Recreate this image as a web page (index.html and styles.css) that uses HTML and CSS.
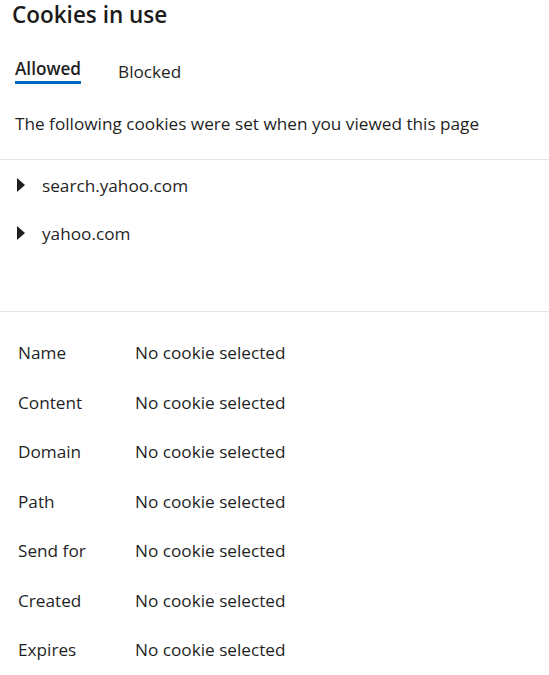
FILE: index.html
```html
<!DOCTYPE html>
<html>
<head>
<meta charset="utf-8">
<link rel="stylesheet" href="styles.css">
</head>
<body>
<div class="panel">
  <h1 class="title">Cookies in use</h1>
  <div class="tabs">
    <div class="tab active">Allowed</div>
    <div class="tab">Blocked</div>
  </div>
  <p class="desc">The following cookies were set when you viewed this page</p>
  <div class="tree">
    <div class="node"><span class="caret"></span><span>search.yahoo.com</span></div>
    <div class="node"><span class="caret"></span><span>yahoo.com</span></div>
  </div>
  <div class="details">
    <div class="row"><span class="label">Name</span><span class="value">No cookie selected</span></div>
    <div class="row"><span class="label">Content</span><span class="value">No cookie selected</span></div>
    <div class="row"><span class="label">Domain</span><span class="value">No cookie selected</span></div>
    <div class="row"><span class="label">Path</span><span class="value">No cookie selected</span></div>
    <div class="row"><span class="label">Send for</span><span class="value">No cookie selected</span></div>
    <div class="row"><span class="label">Created</span><span class="value">No cookie selected</span></div>
    <div class="row"><span class="label">Expires</span><span class="value">No cookie selected</span></div>
  </div>
</div>
</body>
</html>
```
FILE: styles.css
```css
html, body {
  margin: 0;
  padding: 0;
  background: #ffffff;
}
body {
  font-family: "Open Sans", "Noto Sans", sans-serif;
  color: #1f1f1f;
  font-size: 17.2px;
}
.panel {
  width: 549px;
}
.title {
  margin: 0;
  padding: 0 0 0 12px;
  font-size: 22.5px;
  font-weight: 600;
  line-height: 30px;
  height: 30px;
  color: #1b1b1b;
}
.tabs {
  display: flex;
  align-items: flex-start;
  gap: 37px;
  padding: 29px 0 0 15px;
}
.tab {
  line-height: 20px;
  padding-top: 3px;
}
.tab.active {
  font-weight: 600;
  border-bottom: 3px solid #0067c0;
  padding-top: 0;
  padding-bottom: 2px;
}
.desc {
  margin: 0;
  padding: 30px 0 0 15px;
  line-height: 20px;
  height: 45px;
}
.tree {
  border-top: 1px solid #e5e5e5;
  border-bottom: 1px solid #e5e5e5;
  padding-top: 1px;
  height: 150px;
}
.node {
  display: flex;
  align-items: center;
  height: 48px;
  padding-left: 17px;
}
.caret {
  width: 0;
  height: 0;
  border-top: 7.5px solid transparent;
  border-bottom: 7.5px solid transparent;
  border-left: 8px solid #1f1f1f;
  margin-right: 17px;
}
.details {
  padding-top: 16px;
}
.row {
  display: flex;
  align-items: center;
  height: 49.5px;
  padding-left: 18px;
}
.label {
  width: 117px;
}
```
